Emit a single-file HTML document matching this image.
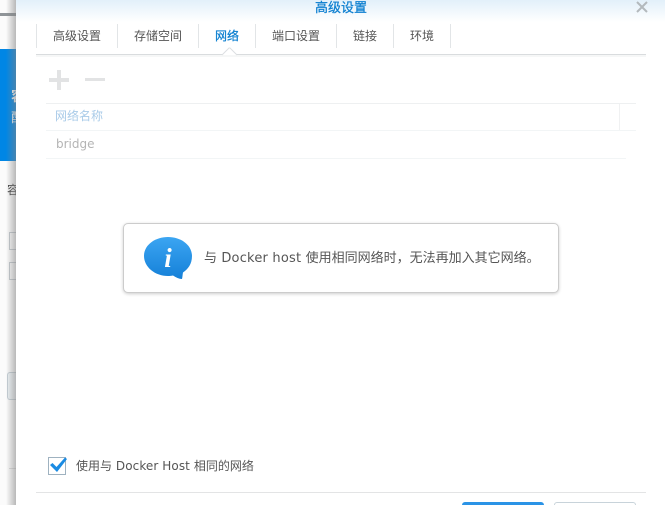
<!DOCTYPE html>
<html style="overflow:hidden;height:505px"><head><meta charset="utf-8">
<style>
html,body{margin:0;padding:0}
body{width:665px;height:505px;overflow:hidden;background:#fff;font-family:"Liberation Sans","Noto Sans CJK SC",sans-serif;color:#555}
#w{position:relative;width:665px;height:505px;overflow:hidden;background:#fff}
.a{position:absolute}
.t{position:absolute;white-space:nowrap;font-size:12px;line-height:16px}
.l{font-family:"DejaVu Sans",sans-serif}
.sep{position:absolute;top:24px;width:1px;height:24px;background:#e2e5e7}
</style></head><body><div id="w">
<!-- background page at left -->
<div class="a" style="left:0;top:0;width:16px;height:505px;background:#fbfbfb"></div>
<div class="a" style="left:0;top:13px;width:16px;height:3px;background:#8f9498"></div>
<div class="a" style="left:0;top:49px;width:16px;height:112px;background:#0086e5"></div>
<div class="t" style="left:11px;top:88px;font-size:14px;width:5px;overflow:hidden;color:#fff;font-weight:bold">容</div>
<div class="t" style="left:11px;top:110px;font-size:13px;width:5px;overflow:hidden;color:#fff">配</div>
<div class="t" style="left:7px;top:182px;font-size:12px;width:9px;overflow:hidden;color:#444">容</div>
<div class="a" style="left:9px;top:232px;width:7px;height:18px;border:1px solid #c5cbd0;border-right:0;box-sizing:border-box"></div>
<div class="a" style="left:9px;top:262px;width:7px;height:18px;border:1px solid #c5cbd0;border-right:0;box-sizing:border-box"></div>
<div class="a" style="left:7px;top:372px;width:9px;height:28px;border:1px solid #c5cfd6;border-right:0;box-sizing:border-box;border-radius:3px 0 0 3px;background:#eef3f6"></div>
<div class="a" style="left:9px;top:468px;width:7px;height:1px;background:#ddd"></div>
<div class="a" style="left:6px;top:0;width:10px;height:505px;background:linear-gradient(90deg,rgba(150,150,150,0),rgba(130,130,130,.55))"></div>
<!-- dialog -->
<div class="a" style="left:16px;top:0;width:649px;height:505px;background:#fff"></div>
<div class="a" style="left:16px;top:0;width:649px;height:22px;background:linear-gradient(180deg,#e2f0fa,#fff)"></div>
<div class="t" style="left:315px;top:0;font-size:13px;color:#0c7fd0;line-height:15px;-webkit-text-stroke:.25px #0c7fd0">高级设置</div>
<svg class="a" style="left:635px;top:0" width="14" height="14"><path d="M2 2 L12 12 M12 2 L2 12" stroke="#b3b9bd" stroke-width="2" fill="none"/></svg>
<!-- tabs -->
<div class="sep" style="left:36px"></div>
<div class="sep" style="left:117px"></div>
<div class="sep" style="left:198px"></div>
<div class="sep" style="left:255px"></div>
<div class="sep" style="left:336px"></div>
<div class="sep" style="left:393px"></div>
<div class="sep" style="left:450px"></div>
<div class="t" style="left:53px;top:28px">高级设置</div>
<div class="t" style="left:134px;top:28px">存储空间</div>
<div class="t" style="left:215px;top:28px;color:#0c7fd0;-webkit-text-stroke:.25px #0c7fd0">网络</div>
<div class="t" style="left:272px;top:28px">端口设置</div>
<div class="t" style="left:353px;top:28px">链接</div>
<div class="t" style="left:410px;top:28px">环境</div>
<div class="a" style="left:36px;top:54px;width:610px;height:1px;background:#d9dcde"></div>
<div class="a" style="left:36px;top:55px;width:610px;height:2px;background:#f6f7f7"></div>
<svg class="a" style="left:220px;top:47px" width="20" height="9"><path d="M2 8 L9 1 L10 1 L17 8" fill="#fff" stroke="#dcdfe1"/></svg>
<!-- toolbar -->
<div class="a" style="left:49px;top:78px;width:20px;height:4px;background:#e2e3e4"></div>
<div class="a" style="left:57px;top:70px;width:4px;height:20px;background:#e2e3e4"></div>
<div class="a" style="left:85px;top:78px;width:20px;height:3px;background:#e2e3e4"></div>
<!-- grid -->
<div class="a" style="left:46px;top:103px;width:590px;height:1px;background:#eef0f1"></div>
<div class="a" style="left:46px;top:130px;width:590px;height:1px;background:#f2f5f6"></div>
<div class="a" style="left:46px;top:158px;width:580px;height:1px;background:#f2f5f6"></div>
<div class="a" style="left:619px;top:104px;width:1px;height:26px;background:#f0f1f2"></div>
<div class="t" style="left:55px;top:108px;color:#a9cbe8">网络名称</div>
<div class="t l" style="left:56px;top:136px;color:#b4b4b4">bridge</div>
<!-- toast -->
<div class="a" style="left:123px;top:223px;width:436px;height:70px;box-sizing:border-box;background:#fff;border:1px solid #ccc;border-radius:5px;box-shadow:0 1px 3px rgba(0,0,0,.2)"></div>
<svg class="a" style="left:143px;top:236px" width="50" height="45" viewBox="0 0 50 45">
<defs><linearGradient id="g" x1="0" y1="0" x2="0" y2="1"><stop offset="0" stop-color="#3ba5f2"/><stop offset="1" stop-color="#1580d8"/></linearGradient></defs>
<path d="M25 1 C38 1 49 9 49 20 C49 28 45 33 40 36.5 C39.5 39 39.5 41 39 43 C36 43 33 41.5 30 39.5 C28 39.8 27 40 25 40 C12 40 1 31 1 20 C1 9 12 1 25 1 Z" fill="url(#g)"/>
<text x="25" y="31" text-anchor="middle" font-family="Liberation Serif,serif" font-style="italic" font-weight="bold" font-size="27" fill="#fff">i</text>
</svg>
<div class="t" style="left:204px;top:250px;color:#555;font-size:13px">与<span class="l" style="letter-spacing:.2px"> Docker host </span>使用相同网络时，无法再加入其它网络。</div>
<!-- checkbox -->
<div class="a" style="left:48px;top:457px;width:18px;height:18px;box-sizing:border-box;border:1px solid #9fb2c0;background:#fff"></div>
<svg class="a" style="left:47px;top:455px" width="22" height="20"><path d="M3 10 L5.5 8 L9.5 12 L18 2.5 L20 4 L10 17 Z" fill="#1a8be3"/></svg>
<div class="t" style="left:76px;top:458px;color:#555">使用与<span class="l" style="letter-spacing:.08px"> Docker Host </span>相同的网络</div>
<!-- footer -->
<div class="a" style="left:36px;top:492px;width:610px;height:1px;background:#e3e4e5"></div>
<div class="a" style="left:462px;top:502px;width:82px;height:3px;background:#2a93e6;border-radius:3px 3px 0 0"></div>
<div class="a" style="left:554px;top:502px;width:82px;height:3px;box-sizing:border-box;background:#fff;border:1px solid #c8d3da;border-bottom:0;border-radius:3px 3px 0 0"></div>
</div></body></html>
